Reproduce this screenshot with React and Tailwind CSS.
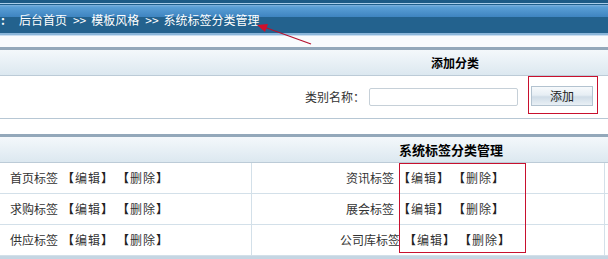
// Tag category admin page (系统标签分类管理)
// Header breadcrumb, an "add category" form, and a table of tag categories.

const leftTags = ['首页标签', '求购标签', '供应标签'];
const rightTags = ['资讯标签', '展会标签', '公司库标签'];

const TagActions = ({ name }) => (
  <span className="whitespace-nowrap">
    {name}
    <span className="ml-[4px] tracking-[1px]">
      <b className="text-[#222]">【</b>编辑<b className="text-[#222]">】</b>
    </span>
    <span className="ml-[9px] tracking-[1px]">
      <b className="text-[#222]">【</b>删除<b className="text-[#222]">】</b>
    </span>
  </span>
);

const App = () => {
  return (
    <div
      className="relative w-[608px] h-[259px] overflow-hidden bg-white text-[12px] text-[#333]"
      style={{ fontFamily: '"Noto Sans CJK SC", "Liberation Sans", sans-serif' }}
    >
      {/* Breadcrumb bar */}
      <div className="h-[36px] flex items-center pt-[4px] text-white leading-[12px] bg-[linear-gradient(to_bottom,#1c5a86_0px,#1c5a86_3px,#a9cdea_3px,#a9cdea_4px,#1f5f8c_4px,#1f5f8c_5px,#7fb2de_5px,#5a9fd6_7px,#3e84c0_17px,#23628e_17px,#23628e_33px,#8ab6da_33px,#8ab6da_35px,#c9def0_35px,#c9def0_36px)]">
        <span className="ml-[1px] font-bold">:</span>
        <span className="ml-[14px]">后台首页</span>
        <span className="ml-[6px]">&gt;&gt;</span>
        <span className="ml-[5px]">模板风格</span>
        <span className="ml-[6px]">&gt;&gt;</span>
        <span className="ml-[5px]">系统标签分类管理</span>
      </div>

      <div className="h-[11px] bg-[#f8fbfd]" />

      {/* Add category */}
      <div className="w-[902px] border-t-[3px] border-[#93a8ba]">
        <div className="h-[26px] flex items-center justify-center pl-[8px] font-bold text-black border-b border-[#bccbd7] bg-[linear-gradient(to_bottom,#f4f8fb,#dce8f0)]">
          添加分类
        </div>
        <div className="h-[43px] flex border-b border-[#b7c7d4]">
          <div className="w-[526px] flex items-center justify-end pr-[8px]">
            <span>类别名称：</span>
            <input
              type="text"
              className="ml-[4px] w-[149px] h-[18px] border border-[#c6d0d8] rounded-[2px] bg-white"
            />
          </div>
          <div className="ml-[2px] w-[70px] h-[38px] border border-[#c8102e]">
            <button className="mt-[9px] ml-[2px] w-[62px] h-[20px] border border-[#b3c3d0] text-[#222] bg-[linear-gradient(to_bottom,#f7fafc,#e6eef4_45%,#cfdce7_55%,#e9f0f5)]">
              添加
            </button>
          </div>
        </div>
      </div>

      <div className="h-[15px]" />

      {/* Tag category list */}
      <div className="relative w-[902px] border-t-[3px] border-[#93a8ba]">
        <div className="h-[26px] flex items-center justify-center font-bold text-black text-[13px] border-b border-[#bccbd7] bg-[linear-gradient(to_bottom,#f4f8fb,#dce8f0)]">
          系统标签分类管理
        </div>
        {leftTags.map((tag, i) => (
          <div key={tag} className="grid grid-cols-[252px_353px_1fr] h-[31px] border-b border-[#d3e0e9]">
            <div className="flex items-center pl-[10px] border-r border-[#d3e0e9]">
              <TagActions name={tag} />
            </div>
            <div className="flex items-center justify-center pr-[5px] border-r border-[#d3e0e9]">
              <TagActions name={rightTags[i]} />
            </div>
            <div />
          </div>
        ))}
        <div className="h-[3px] bg-[#c5d6e3]" />

        {/* red annotation box */}
        <div className="absolute left-[399px] top-[26px] w-[127px] h-[90px] border border-[#c8102e] pointer-events-none" />
      </div>

      {/* red annotation arrow */}
      <svg className="absolute left-0 top-0 pointer-events-none" width="608" height="60">
        <line x1="311" y1="44" x2="264" y2="27" stroke="#b5122e" strokeWidth="1.3" />
        <polygon points="257,25 268,24 265,32" fill="#d0102a" />
      </svg>
    </div>
  );
};

export default App;
